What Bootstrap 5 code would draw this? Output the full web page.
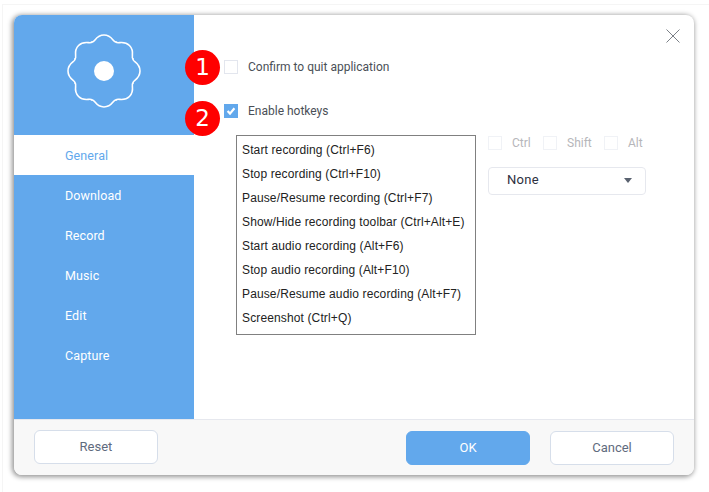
<!DOCTYPE html>
<html lang="en">
<head>
<meta charset="utf-8">
<title>Settings</title>
<link rel="stylesheet" href="https://cdn.jsdelivr.net/npm/bootstrap@5.3.0/dist/css/bootstrap.min.css">
<style>
html,body{height:100%;}
body{background:#fff;font-family:Roboto,"Open Sans",sans-serif;overflow:hidden;}
.stage{width:707px;height:488px;margin:4px 0 0 2px;padding:10px 15px 17px 11px;border-top:1px solid #f5f5f5;border-left:1px solid #f5f5f5;}
.dlg{position:relative;width:680px;height:460px;background:#fff;border-radius:8px;overflow:hidden;box-shadow:-1px 1px 5px 1px rgba(0,0,0,.42);}
.dlg-main{height:404px;}
.side{width:180px;background:#62a8ec;flex:none;}
.side-logo{height:120px;}
.side .nav-link{height:40px;line-height:42px;padding:0 0 0 51px;color:#fff;font-size:12.5px;letter-spacing:.1px;}
.side .nav-link.active{background:#fff;color:#62a8ec;}
.pane{padding:45px 0 0 30px;font-size:12px;color:#4a4f57;}
.pane .form-check-input{width:14px;height:14px;margin:0;border:1px solid #e3e6ee;border-radius:0;flex:none;}
.pane .form-check-input:checked{background-color:#62a8ec;border-color:#62a8ec;background-size:14px 14px;background-image:url("data:image/svg+xml,%3csvg xmlns='http://www.w3.org/2000/svg' viewBox='0 0 14 14'%3e%3cpath fill='none' stroke='%23fff' stroke-width='2.2' d='M3.6 7l2.4 2.6 4.4-5.4'/%3e%3c/svg%3e");}
.opt{height:14px;line-height:14px;}
.opt-gap{margin-top:30px;}
.opt label{margin-left:10px;}
.keys{margin:17px 0 0 12px;}
.keylist{width:240px;height:200px;border:1px solid #808080;padding:2px 0 0 5px;font-family:"Liberation Sans",sans-serif;font-size:12px;letter-spacing:.13px;color:#222;}
.keylist div{height:24px;line-height:24px;white-space:nowrap;}
.mods{margin-left:12px;width:160px;}
.mods .opt{margin-top:1px;}
.mods label{margin-left:10px;color:#b6b6ba;}
.mod-a{width:55px;}
.mod-b{width:61px;}
.pick{margin-top:17px;width:158px;height:28px;border:1px solid #e6e8ee;border-radius:4px;padding:0 13px 2px 18px;font-size:13px;color:#2d3040;letter-spacing:.3px;}
.pick-arrow{width:0;height:0;border-left:4px solid transparent;border-right:4px solid transparent;border-top:5px solid #5a6270;}
.dlg-foot{height:56px;background:#f8f8f8;border-top:1px solid #e6e8ee;padding:10px 20px 0;}
.fbtn{width:124px;height:34px;padding:0;font-size:13px;line-height:32px;border-radius:6px;background:#fff;border:1px solid #d6deea;color:#5f6b7e;}
.fbtn-ok{background:#62a8ec;border-color:#62a8ec;color:#fff;}
.fgroup{gap:20px;margin-top:1px;}
.num{position:absolute;left:171px;width:35px;height:35px;border-radius:50%;background:#f00;color:#fff;font-family:"DejaVu Sans",sans-serif;font-size:23px;line-height:35px;text-align:center;}
.num-a{top:35px;}
.num-b{top:86px;}
.shut{position:absolute;left:652px;top:14px;display:block;}
</style>
</head>
<body>
<div class="stage">
  <div class="dlg">
    <div class="dlg-main d-flex">
      <div class="side">
        <div class="side-logo">
          <svg width="180" height="120" viewBox="0 0 180 120" aria-hidden="true">
            <defs><path id="lobe" d="M-12,-29C-9,-28.5 -8.5,-36 0,-36C8.5,-36 9,-28.5 12,-29" fill="none" stroke="#fff" stroke-width="1.6" stroke-linecap="round"/></defs>
            <g transform="translate(90 56)">
              <use href="#lobe"/>
              <use href="#lobe" transform="rotate(45)"/>
              <use href="#lobe" transform="rotate(90)"/>
              <use href="#lobe" transform="rotate(135)"/>
              <use href="#lobe" transform="rotate(180)"/>
              <use href="#lobe" transform="rotate(225)"/>
              <use href="#lobe" transform="rotate(270)"/>
              <use href="#lobe" transform="rotate(315)"/>
              <circle r="10" fill="#fff"/>
            </g>
          </svg>
        </div>
        <nav class="nav flex-column">
          <a class="nav-link active" href="#">General</a>
          <a class="nav-link" href="#">Download</a>
          <a class="nav-link" href="#">Record</a>
          <a class="nav-link" href="#">Music</a>
          <a class="nav-link" href="#">Edit</a>
          <a class="nav-link" href="#">Capture</a>
        </nav>
      </div>
      <div class="pane flex-grow-1">
        <div class="opt d-flex align-items-center"><input class="form-check-input" type="checkbox" id="c1"><label for="c1">Confirm to quit application</label></div>
        <div class="opt opt-gap d-flex align-items-center"><input class="form-check-input" type="checkbox" id="c2" checked><label for="c2">Enable hotkeys</label></div>
        <div class="keys d-flex align-items-start">
          <div class="keylist">
            <div>Start recording (Ctrl+F6)</div>
            <div>Stop recording (Ctrl+F10)</div>
            <div>Pause/Resume recording (Ctrl+F7)</div>
            <div>Show/Hide recording toolbar (Ctrl+Alt+E)</div>
            <div>Start audio recording (Alt+F6)</div>
            <div>Stop audio recording (Alt+F10)</div>
            <div>Pause/Resume audio recording (Alt+F7)</div>
            <div>Screenshot (Ctrl+Q)</div>
          </div>
          <div class="mods">
            <div class="d-flex opt">
              <div class="mod-a d-flex align-items-center"><input class="form-check-input" type="checkbox" id="m1" disabled><label for="m1">Ctrl</label></div>
              <div class="mod-b d-flex align-items-center"><input class="form-check-input" type="checkbox" id="m2" disabled><label for="m2">Shift</label></div>
              <div class="d-flex align-items-center"><input class="form-check-input" type="checkbox" id="m3" disabled><label for="m3">Alt</label></div>
            </div>
            <div class="pick d-flex align-items-center justify-content-between"><span>None</span><span class="pick-arrow"></span></div>
          </div>
        </div>
      </div>
    </div>
    <div class="dlg-foot d-flex justify-content-between align-items-start">
      <button type="button" class="btn fbtn">Reset</button>
      <div class="d-flex fgroup">
        <button type="button" class="btn fbtn fbtn-ok">OK</button>
        <button type="button" class="btn fbtn">Cancel</button>
      </div>
    </div>
    <span class="num num-a">1</span>
    <span class="num num-b">2</span>
    <svg class="shut" width="14" height="14" viewBox="0 0 14 14" aria-label="Close"><path d="M.5.5 13.5 13.5M13.5.5.5 13.5" stroke="#7b8087" stroke-width="1" fill="none"/></svg>
  </div>
</div>
<script src="https://cdn.jsdelivr.net/npm/bootstrap@5.3.0/dist/js/bootstrap.bundle.min.js"></script>
</body>
</html>
